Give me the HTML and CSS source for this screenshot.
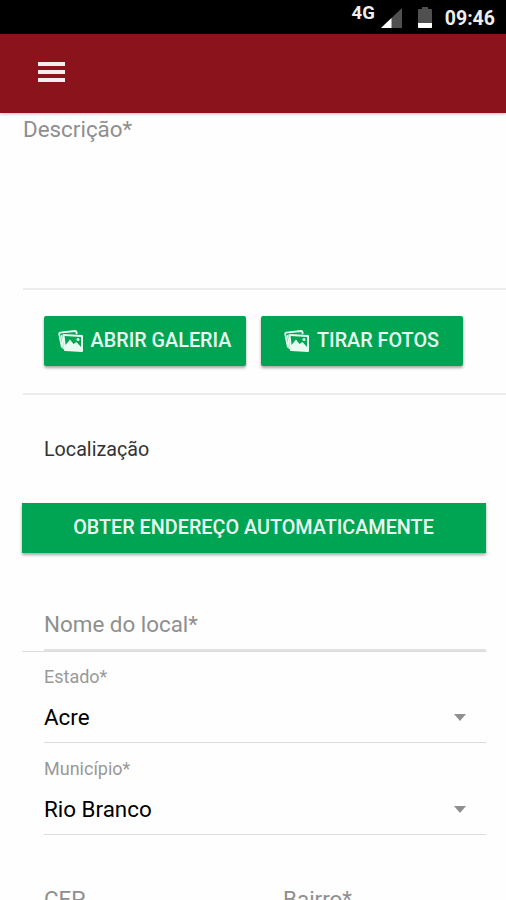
FILE: index.html
```html
<!DOCTYPE html>
<html lang="pt-BR">

<head>
    <meta charset="UTF-8">
    <title>Novo registro</title>
    <link rel="stylesheet" href="styles.css">
</head>

<body>
    <div class="status">
        <span class="network">4G</span>
        <svg class="signal" width="21" height="20" viewBox="0 0 21 20">
            <path d="M21 0V20H0Z" fill="#505050" />
            <path d="M10.5 10V20H0Z" fill="#fff" />
        </svg>
        <svg class="battery" width="14" height="21" viewBox="0 0 14 21">
            <path d="M4 0h6v2h3q1 0 1 1v17q0 1-1 1H1q-1 0-1-1V3q0-1 1-1h3z" fill="#505050" />
            <path d="M0 16h14v4q0 1-1 1H1q-1 0-1-1z" fill="#fff" />
        </svg>
        <span class="clock">09:46</span>
    </div>
    <header class="toolbar">
        <div class="menu"><i></i><i></i><i></i></div>
    </header>
    <main class="content">
        <div class="description"><span class="text">Descrição*</span></div>
        <div class="photos">
            <button class="btn">
                <svg class="icon" width="25" height="22" viewBox="0 0 25 22">
                    <path d="M4 17.5L1.2 4.2Q1 3 2.2 2.6L17 1Q18.4 1 18.6 2.4V4" fill="none" stroke="#e9faf0" stroke-width="1.8" />
                    <path d="M3.6 5L5.4 19" fill="none" stroke="#e9faf0" stroke-width="1.5" />
                    <path fill-rule="evenodd" fill="#e9faf0" d="M5.5 4L24 5Q25 5 25 6V21Q25 22 24 22L7 21Q6 21 5.9 20L4.5 5Q4.5 4 5.5 4ZM6.6 6L7.6 15L12 9.5L15.5 14L18.5 12L23 17V7Z" />
                    <circle cx="20" cy="9.5" r="1.5" fill="#e9faf0" />
                </svg>
                <span class="text">ABRIR GALERIA</span>
            </button>
            <button class="btn">
                <svg class="icon" width="25" height="22" viewBox="0 0 25 22">
                    <path d="M4 17.5L1.2 4.2Q1 3 2.2 2.6L17 1Q18.4 1 18.6 2.4V4" fill="none" stroke="#e9faf0" stroke-width="1.8" />
                    <path d="M3.6 5L5.4 19" fill="none" stroke="#e9faf0" stroke-width="1.5" />
                    <path fill-rule="evenodd" fill="#e9faf0" d="M5.5 4L24 5Q25 5 25 6V21Q25 22 24 22L7 21Q6 21 5.9 20L4.5 5Q4.5 4 5.5 4ZM6.6 6L7.6 15L12 9.5L15.5 14L18.5 12L23 17V7Z" />
                    <circle cx="20" cy="9.5" r="1.5" fill="#e9faf0" />
                </svg>
                <span class="text">TIRAR FOTOS</span>
            </button>
        </div>
        <div class="heading"><span class="text">Localização</span></div>
        <button class="btn btn-full"><span class="text">OBTER ENDEREÇO AUTOMATICAMENTE</span></button>
        <div class="place">
            <div class="place-input"><span class="text">Nome do local*</span></div>
        </div>
        <div class="select">
            <span class="text label">Estado*</span>
            <div class="value"><span class="text">Acre</span><i class="arrow"></i></div>
        </div>
        <div class="select select-city">
            <span class="text label">Município*</span>
            <div class="value"><span class="text">Rio Branco</span><i class="arrow"></i></div>
        </div>
        <div class="address">
            <span class="text">CEP</span>
            <span class="text">Bairro*</span>
        </div>
    </main>
</body>

</html>
```

FILE: styles.css
```css
* {
    box-sizing: border-box;
}

body {
    margin: 0;
    height: 900px;
    overflow: hidden;
    display: flex;
    flex-direction: column;
    background-color: #fefefe;
    font-family: Roboto, "Liberation Sans", sans-serif;
    font-size: 22.4px;
    color: #000;
}

.text {
    white-space: nowrap;
}

.status {
    flex: none;
    height: 34px;
    display: flex;
    justify-content: flex-end;
    padding-right: 11px;
    background-color: #000;
    color: #eee;
}

.network {
    margin: 3px 6px 0 0;
    font-size: 18.5px;
    font-weight: 700;
    line-height: 20px;
}

.signal {
    margin: 8px 16px 0 0;
}

.battery {
    margin: 7px 13px 0 0;
}

.clock {
    font-size: 19.5px;
    font-weight: 700;
    line-height: 37px;
}

.toolbar {
    flex: none;
    height: 79px;
    padding: 28px 38px;
    background-color: #8a131c;
    box-shadow: 0 1px 3px rgba(80, 0, 20, .3);
}

.menu {
    width: 27px;
    display: flex;
    flex-direction: column;
    gap: 4px;
}

.menu i {
    height: 4px;
    background-color: #f6eeee;
}

.content {
    flex: 1;
    overflow: hidden;
}

.description {
    height: 177px;
    margin-left: 23px;
    border-bottom: 2px solid #ececec;
    line-height: 33px;
    color: #8f8f8f;
}

.photos {
    height: 105px;
    margin-left: 23px;
    padding: 26px 0 0 21px;
    display: flex;
    gap: 15px;
    border-bottom: 2px solid #ececec;
}

.btn {
    width: 202px;
    height: 50px;
    padding: 0 1px 2px 0;
    display: flex;
    align-items: center;
    justify-content: center;
    gap: 8px;
    border: none;
    border-radius: 2px;
    background-color: #00a554;
    box-shadow: 0 2px 3px rgba(0, 0, 0, .35);
    font-family: inherit;
    font-size: 19.8px;
    font-weight: 500;
    color: #e9faf0;
}

.icon {
    margin-top: 2px;
}

.btn-full {
    width: 464px;
    margin-left: 22px;
    border-radius: 0;
}

.heading {
    height: 108px;
    padding-left: 44px;
    font-size: 19.7px;
    line-height: 109px;
    color: #333;
}

.place {
    height: 99px;
    margin: 0 20px 0 22px;
    padding-left: 22px;
    border-bottom: 1px solid #dcdcdc;
}

.place-input {
    height: 98px;
    border-bottom: 2px solid #e2e2e2;
    padding-top: 53px;
    line-height: 36px;
    color: #8f8f8f;
}

.select {
    height: 91px;
    margin: 0 20px 0 44px;
    padding-top: 13px;
    border-bottom: 1px solid #dcdcdc;
}

.select-city {
    height: 92px;
    padding-top: 14px;
}

.label {
    display: block;
    font-size: 18px;
    line-height: 24px;
    color: #999;
}

.value {
    display: flex;
    justify-content: space-between;
    align-items: center;
    height: 56px;
    padding-right: 20px;
}

.arrow {
    border: 6px solid transparent;
    border-top: 7px solid #8f8f8f;
    border-bottom: none;
}

.address {
    display: grid;
    grid-template-columns: 239px 1fr;
    padding: 46px 0 0 44px;
    line-height: 36px;
    color: #8f8f8f;
}
```
